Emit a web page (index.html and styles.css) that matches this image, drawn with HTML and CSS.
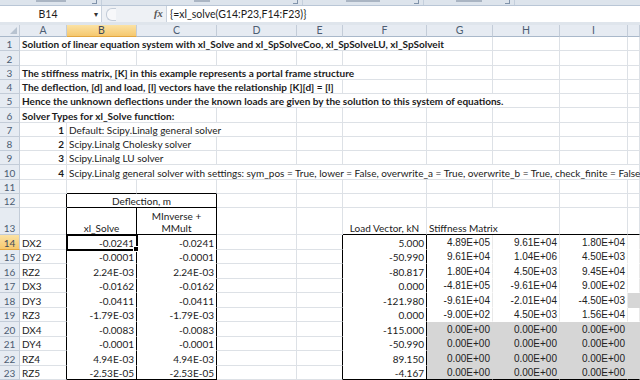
FILE: index.html
```html
<!DOCTYPE html>
<html lang="en">
<head>
  <meta charset="UTF-8">
  <meta name="viewport" content="width=device-width, initial-scale=1.0">
  <title>xl_Solve - portal frame</title>
  <link rel="stylesheet" href="styles.css">
</head>
<body>
  <div class="ribbon">
    <div class="group g1"><span class="stub s1"></span><i class="launcher"></i></div>
    <div class="group g2"><span class="stub s2"></span><i class="launcher"></i></div>
    <div class="group g3"><span class="stub s3"></span><i class="launcher"></i></div>
    <div class="group g4"><span class="stub s4"></span><i class="launcher"></i></div>
    <div class="group g5"></div>
  </div>

  <div class="formula-bar">
    <div class="name-box">B14</div>
    <div class="name-arrow">&#9662;</div>
    <div class="fb-buttons"><span class="knob"></span></div>
    <div class="fx-label">fx</div>
    <div class="formula">{=xl_solve(G14:P23,F14:F23)}</div>
  </div>

  <div class="gap"></div>

  <table class="sheet">
    <colgroup>
      <col class="w-rh">
      <col class="w-a">
      <col class="w-b">
      <col class="w-c">
      <col class="w-d">
      <col class="w-e">
      <col class="w-f">
      <col class="w-g">
      <col class="w-h">
      <col class="w-i">
      <col class="w-j">
    </colgroup>
    <tr class="hdr">
      <th class="corner"></th>
      <th>A</th><th class="sel">B</th><th>C</th><th>D</th><th>E</th>
      <th>F</th><th>G</th><th>H</th><th>I</th><th></th>
    </tr>
    <tr class="r">
      <th class="rh">1</th>
      <td colspan="7" class="bold">Solution of linear equation system with xl_Solve and xl_SpSolveCoo, xl_SpSolveLU, xl_SpSolveit</td>
      <td></td><td></td><td></td>
    </tr>
    <tr class="r">
      <th class="rh">2</th>
      <td></td><td></td><td></td><td></td><td></td><td></td><td></td><td></td><td></td><td></td>
    </tr>
    <tr class="r">
      <th class="rh">3</th>
      <td colspan="6" class="bold">The stiffness matrix, [K] in this example represents a portal frame structure</td>
      <td></td><td></td><td></td><td></td>
    </tr>
    <tr class="r">
      <th class="rh">4</th>
      <td colspan="5" class="bold">The deflection, [d] and load, [l] vectors have the relationship [K][d] = [l]</td>
      <td></td><td></td><td></td><td></td><td></td>
    </tr>
    <tr class="r">
      <th class="rh">5</th>
      <td colspan="8" class="bold">Hence the unknown deflections under the known loads are given by the solution to this system of equations.</td>
      <td></td><td></td>
    </tr>
    <tr class="r">
      <th class="rh">6</th>
      <td colspan="3" class="bold">Solver Types for xl_Solve function:</td>
      <td></td><td></td><td></td><td></td><td></td><td></td><td></td>
    </tr>
    <tr class="r">
      <th class="rh">7</th>
      <td class="bold num">1</td>
      <td colspan="3">Default: Scipy.Linalg general solver</td>
      <td></td><td></td><td></td><td></td><td></td><td></td>
    </tr>
    <tr class="r">
      <th class="rh">8</th>
      <td class="bold num">2</td>
      <td colspan="2">Scipy.Linalg Cholesky solver</td>
      <td></td><td></td><td></td><td></td><td></td><td></td><td></td>
    </tr>
    <tr class="r">
      <th class="rh">9</th>
      <td class="bold num">3</td>
      <td colspan="2">Scipy.Linalg LU solver</td>
      <td></td><td></td><td></td><td></td><td></td><td></td><td></td>
    </tr>
    <tr class="r">
      <th class="rh">10</th>
      <td class="bold num">4</td>
      <td colspan="9">Scipy.Linalg general solver with settings: sym_pos = True, lower = False, overwrite_a = True, overwrite_b = True, check_finite = False</td>
    </tr>
    <tr class="r">
      <th class="rh">11</th>
      <td></td><td class="over"></td><td class="over"></td><td></td><td></td><td></td><td></td><td></td><td></td><td></td>
    </tr>
    <tr class="r">
      <th class="rh">12</th>
      <td class="edge"></td>
      <td colspan="2" class="merged">Deflection, m</td>
      <td></td><td></td><td></td><td></td><td></td><td></td><td></td>
    </tr>
    <tr class="tall">
      <th class="rh">13</th>
      <td class="edge"></td>
      <td class="hb">xl_Solve</td>
      <td class="hb">MInverse +<br>MMult</td>
      <td></td><td></td>
      <td class="over center">Load Vector, kN</td>
      <td colspan="2" class="over">Stiffness Matrix</td>
      <td class="over"></td><td class="over"></td>
    </tr>
    <tr class="d">
      <th class="rh sel">14</th>
      <td class="edge">DX2</td>
      <td class="num bx active">-0.0241</td>
      <td class="num bx">-0.0241</td>
      <td></td><td class="edge"></td>
      <td class="num fv">5.000</td>
      <td class="mat">4.89E+05</td><td class="mat">9.61E+04</td><td class="mat">1.80E+04</td><td class="mat"></td>
    </tr>
    <tr class="d">
      <th class="rh">15</th>
      <td class="edge">DY2</td>
      <td class="num bx">-0.0001</td>
      <td class="num bx">-0.0001</td>
      <td></td><td class="edge"></td>
      <td class="num fv">-50.990</td>
      <td class="mat">9.61E+04</td><td class="mat">1.04E+06</td><td class="mat">4.50E+03</td><td class="mat"></td>
    </tr>
    <tr class="d">
      <th class="rh">16</th>
      <td class="edge">RZ2</td>
      <td class="num bx">2.24E-03</td>
      <td class="num bx">2.24E-03</td>
      <td></td><td class="edge"></td>
      <td class="num fv">-80.817</td>
      <td class="mat">1.80E+04</td><td class="mat">4.50E+03</td><td class="mat">9.45E+04</td><td class="mat"></td>
    </tr>
    <tr class="d">
      <th class="rh">17</th>
      <td class="edge">DX3</td>
      <td class="num bx">-0.0162</td>
      <td class="num bx">-0.0162</td>
      <td></td><td class="edge"></td>
      <td class="num fv">0.000</td>
      <td class="mat">-4.81E+05</td><td class="mat">-9.61E+04</td><td class="mat">9.00E+02</td><td class="mat"></td>
    </tr>
    <tr class="d">
      <th class="rh">18</th>
      <td class="edge">DY3</td>
      <td class="num bx">-0.0411</td>
      <td class="num bx">-0.0411</td>
      <td></td><td class="edge"></td>
      <td class="num fv">-121.980</td>
      <td class="mat">-9.61E+04</td><td class="mat">-2.01E+04</td><td class="mat">-4.50E+03</td><td class="mat fill"></td>
    </tr>
    <tr class="d">
      <th class="rh">19</th>
      <td class="edge">RZ3</td>
      <td class="num bx">-1.79E-03</td>
      <td class="num bx">-1.79E-03</td>
      <td></td><td class="edge"></td>
      <td class="num fv">0.000</td>
      <td class="mat">-9.00E+02</td><td class="mat">4.50E+03</td><td class="mat">1.56E+04</td><td class="mat"></td>
    </tr>
    <tr class="d">
      <th class="rh">20</th>
      <td class="edge">DX4</td>
      <td class="num bx">-0.0083</td>
      <td class="num bx">-0.0083</td>
      <td></td><td class="edge"></td>
      <td class="num fv">-115.000</td>
      <td class="mat fill">0.00E+00</td><td class="mat fill">0.00E+00</td><td class="mat fill">0.00E+00</td><td class="mat fill"></td>
    </tr>
    <tr class="d">
      <th class="rh">21</th>
      <td class="edge">DY4</td>
      <td class="num bx">-0.0001</td>
      <td class="num bx">-0.0001</td>
      <td></td><td class="edge"></td>
      <td class="num fv">-50.990</td>
      <td class="mat fill">0.00E+00</td><td class="mat fill">0.00E+00</td><td class="mat fill">0.00E+00</td><td class="mat fill"></td>
    </tr>
    <tr class="d">
      <th class="rh">22</th>
      <td class="edge">RZ4</td>
      <td class="num bx">4.94E-03</td>
      <td class="num bx">4.94E-03</td>
      <td></td><td class="edge"></td>
      <td class="num fv">89.150</td>
      <td class="mat fill">0.00E+00</td><td class="mat fill">0.00E+00</td><td class="mat fill">0.00E+00</td><td class="mat fill"></td>
    </tr>
    <tr class="d">
      <th class="rh">23</th>
      <td class="edge">RZ5</td>
      <td class="num bx last">-2.53E-05</td>
      <td class="num bx last">-2.53E-05</td>
      <td></td><td class="edge"></td>
      <td class="num fv last">-4.167</td>
      <td class="mat fill last">0.00E+00</td><td class="mat fill last">0.00E+00</td><td class="mat fill last">0.00E+00</td><td class="mat fill last"></td>
    </tr>
  </table>
</body>
</html>
```

FILE: styles.css
```css
body {
  margin: 0;
  width: 640px;
  height: 380px;
  overflow: hidden;
  background: #fff;
  font-family: Lato, "Open Sans", sans-serif;
  color: #1b1b1b;
}

/* bottom edge of the ribbon, group labels cut off */
.ribbon {
  display: flex;
  height: 5px;
  overflow: hidden;
  background: #dde4ec;
  border-bottom: 1px solid #b9c6d6;
}
.group {
  position: relative;
  display: flex;
  justify-content: center;
  border-right: 1px solid #c4cfdc;
}
.stub {
  height: 2px;
  background: #aab5c3;
}
.s1 { width: 30px; }
.s2 { width: 16px; }
.s3 { width: 34px; }
.s4 { width: 26px; }
.launcher {
  position: absolute;
  right: 4px;
  top: 0;
  width: 4px;
  height: 3px;
  border-right: 1px solid #8093aa;
  border-bottom: 1px solid #8093aa;
}
.g1 { width: 101px; }
.g2 { width: 200px; }
.g3 { width: 120px; }
.g4 { width: 90px; }
.g5 { flex: 1; border-right: none; }

.formula-bar {
  display: flex;
  height: 16px;
  background: #eef1f5;
  font-size: 10.5px;
  line-height: 16px;
}
.name-box {
  width: 92px;
  background: #fff;
  text-align: center;
  padding-left: 2px;
}
.name-arrow {
  width: 7px;
  background: #fff;
  font-size: 8px;
  color: #333;
  border-right: 1px solid #c9d2dd;
}
.fb-buttons {
  width: 48px;
  display: flex;
  align-items: center;
  padding-left: 4px;
}
.knob {
  width: 9px;
  height: 11px;
  border: 1px solid #c3ccd8;
  border-right: none;
  border-radius: 6px 0 0 6px;
  background: #f7f8fa;
}
.fx-label {
  width: 12px;
  font-family: "Liberation Serif", serif;
  font-style: italic;
  font-weight: bold;
  color: #555;
}
.formula {
  flex: 1;
  background: #fff;
  border-left: 1px solid #c9d2dd;
  padding-left: 3px;
}

.gap {
  height: 3px;
  background: #dfe5ec;
}

.sheet {
  border-collapse: separate;
  border-spacing: 0;
  table-layout: fixed;
  width: 640px;
  font-size: 10px;
}
.w-rh { width: 20px; }
.w-a { width: 47px; }
.w-b { width: 70px; }
.w-c { width: 80px; }
.w-d { width: 80px; }
.w-e { width: 46px; }
.w-f { width: 84px; }
.w-g { width: 66px; }
.w-h { width: 67px; }
.w-i { width: 68px; }
.w-j { width: 12px; }

.sheet th {
  background: #e6ebf2;
  border-right: 1px solid #c3ccd8;
  border-bottom: 1px solid #c3ccd8;
  font-weight: normal;
  color: #4d5d72;
  padding: 0;
  overflow: hidden;
  white-space: nowrap;
}
.hdr { height: 12px; }
.hdr th {
  line-height: 11px;
  font-size: 10.5px;
  border-bottom-color: #a9b8ca;
}
.corner {
  position: relative;
}
.corner::after {
  content: "";
  position: absolute;
  right: 2px;
  bottom: 2px;
  border-left: 7px solid transparent;
  border-bottom: 7px solid #b8c3d0;
}
.sheet th.sel {
  background: linear-gradient(#fbe2a4, #f6c86e);
  border-bottom-color: #e2a640;
  color: #3e4a5a;
}
.sheet .rh {
  text-align: center;
  vertical-align: bottom;
  line-height: 12px;
}

.r { height: 14.25px; }
.tall { height: 27px; }
.d { height: 14.5px; }

.sheet td {
  border-right: 1px solid #dde1e6;
  border-bottom: 1px solid #dde1e6;
  padding: 0 2px;
  line-height: 12px;
  vertical-align: bottom;
  white-space: nowrap;
  overflow: visible;
}
.bold { font-weight: bold; }
.num { text-align: right; }
.center { text-align: center; }

/* black box borders */
.sheet td.edge { border-right-color: #000; }
.sheet td.over { border-bottom-color: #000; }
.sheet td.merged {
  text-align: center;
  border-right-color: #000;
  border-bottom-color: #000;
}
.sheet td.hb {
  text-align: center;
  white-space: normal;
  border-right-color: #000;
  border-bottom-color: #000;
}
.sheet td.bx,
.sheet td.fv {
  border-right-color: #000;
  border-bottom-color: #fff;
}
.sheet td.mat {
  text-align: right;
  font-family: "Liberation Sans", Arial, sans-serif;
  font-size: 10px;
  border-right-color: #e9e9e9;
  border-bottom-color: #fff;
  color: #222;
}
.sheet td.fill {
  background: #d6d6d6;
  border-right-color: #d6d6d6;
  border-bottom-color: #d6d6d6;
}
.sheet td.last { border-bottom-color: #000; }

.sheet td.active {
  position: relative;
  outline: 2px solid #000;
  outline-offset: -1px;
}
.active::after {
  content: "";
  position: absolute;
  right: -3px;
  bottom: -3px;
  width: 4px;
  height: 4px;
  background: #000;
  border: 1px solid #fff;
}
```
